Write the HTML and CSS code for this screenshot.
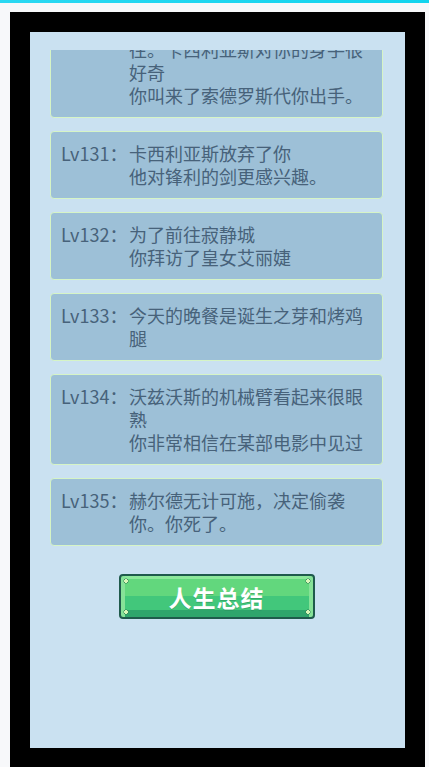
FILE: index.html
```html
<!DOCTYPE html>
<html lang="zh-CN">
<head>
<meta charset="utf-8">
<title>人生记录</title>
<link rel="stylesheet" href="styles.css">
</head>
<body>
<div class="topbar"></div>
<div class="frame">
  <main class="panel">
    <div class="log">
      <div class="log-track">
        <div class="entry">
          <span class="lv">Lv130：</span>
          <div class="msg"><p>你的英勇事迹让无数人心生向往。卡西利亚斯对你的身手很好奇</p><p>你叫来了索德罗斯代你出手。</p></div>
        </div>
        <div class="entry">
          <span class="lv">Lv131：</span>
          <div class="msg"><p>卡西利亚斯放弃了你</p><p>他对锋利的剑更感兴趣。</p></div>
        </div>
        <div class="entry">
          <span class="lv">Lv132：</span>
          <div class="msg"><p>为了前往寂静城</p><p>你拜访了皇女艾丽婕</p></div>
        </div>
        <div class="entry">
          <span class="lv">Lv133：</span>
          <div class="msg"><p>今天的晚餐是诞生之芽和烤鸡腿</p></div>
        </div>
        <div class="entry">
          <span class="lv">Lv134：</span>
          <div class="msg"><p>沃兹沃斯的机械臂看起来很眼熟</p><p>你非常相信在某部电影中见过</p></div>
        </div>
        <div class="entry">
          <span class="lv">Lv135：</span>
          <div class="msg"><p>赫尔德无计可施，决定偷袭你。你死了。</p></div>
        </div>
      </div>
    </div>
    <div class="actions">
      <button class="pixel-btn" type="button">人生总结</button>
    </div>
  </main>
</div>
</body>
</html>
```

FILE: styles.css
```css
html, body {
  margin: 0;
  padding: 0;
}

body {
  background: #f7f8fa;
  height: 767px;
  overflow: hidden;
  font-family: "Noto Sans CJK SC", "Noto Sans", sans-serif;
}

.topbar {
  height: 3px;
  background: linear-gradient(to right, #2ad8f2, #12d4ee);
}

.frame {
  margin: 9px 0 0 10px;
  width: 375px;
  padding: 20px;
  background: #000;
}

.panel {
  height: 716px;
  background: #cae1f1;
  padding: 18px 22px 0 20px;
  box-sizing: border-box;
  display: flex;
  flex-direction: column;
}

.log {
  height: 497px;
  overflow: hidden;
}

.log-track {
  margin-top: -46px;
  display: flex;
  flex-direction: column;
  gap: 13px;
}

.entry {
  display: flex;
  background: #9dc0d7;
  border: 1px solid #d6f4c6;
  border-radius: 4px;
  padding: 10px 12px 10px 10px;
  color: #47627a;
  font-size: 18px;
  line-height: 23px;
}

.lv {
  flex: none;
  width: 68px;
}

.msg {
  flex: 1;
  min-width: 0;
}

.msg p {
  margin: 0;
}

.actions {
  display: flex;
  justify-content: center;
  padding-top: 27px;
}

.pixel-btn {
  width: 196px;
  height: 45px;
  padding: 0;
  border: 2px solid #1f5a4c;
  border-radius: 4px;
  color: #fff;
  font-family: "Noto Sans CJK SC", sans-serif;
  font-size: 23px;
  font-weight: 700;
  letter-spacing: 1px;
  line-height: 40px;
  text-shadow: 0 1px 0 rgba(30, 110, 70, 0.35);
  background:
    radial-gradient(circle at 5px 5px, #d8f7b8 0 1.6px, #2d7a52 2.2px, transparent 2.8px),
    radial-gradient(circle at calc(100% - 5px) 5px, #d8f7b8 0 1.6px, #2d7a52 2.2px, transparent 2.8px),
    radial-gradient(circle at 5px calc(100% - 5px), #d8f7b8 0 1.6px, #2d7a52 2.2px, transparent 2.8px),
    radial-gradient(circle at calc(100% - 5px) calc(100% - 5px), #d8f7b8 0 1.6px, #2d7a52 2.2px, transparent 2.8px),
    linear-gradient(to right, #86e298 0 4px, transparent 4px calc(100% - 4px), #86e298 calc(100% - 4px)),
    linear-gradient(to bottom, #8ce89b 0 3px, #62d77d 3px 48%, #42c77b 48% 84%, #2fa56c 84%);
  cursor: pointer;
}
```
